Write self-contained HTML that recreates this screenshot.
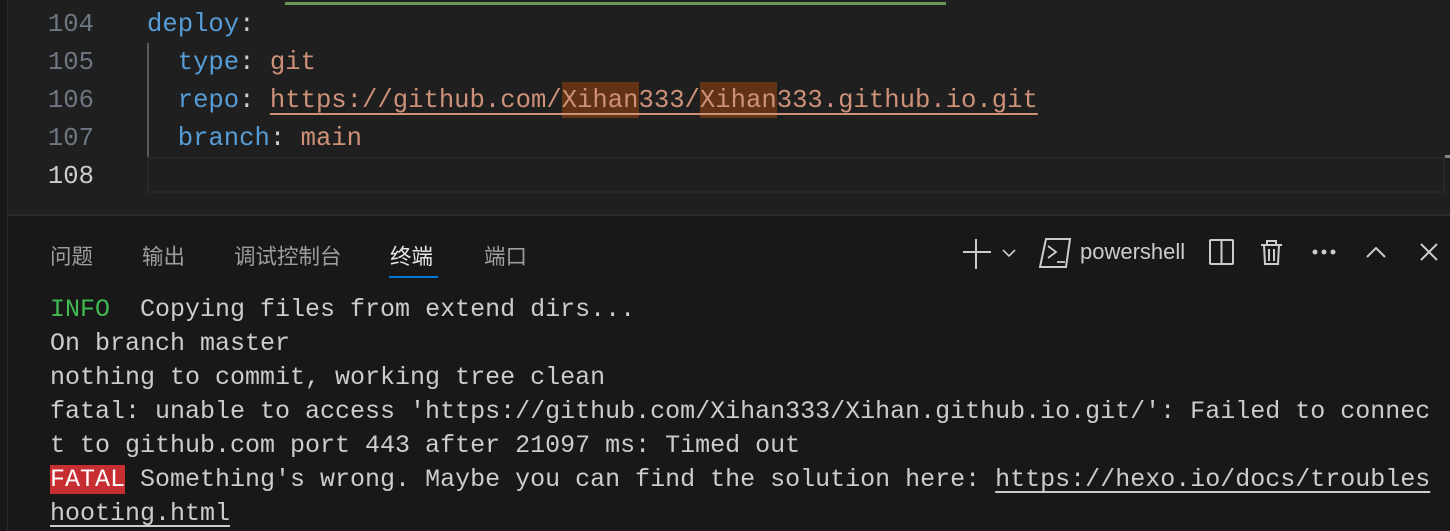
<!DOCTYPE html>
<html><head><meta charset="utf-8"><style>
*{margin:0;padding:0;box-sizing:border-box}
body{width:1450px;height:530px;overflow:hidden;background:#1f1f1f;position:relative;font-family:"Liberation Mono",monospace}
.ed{position:absolute;left:0;top:0;width:1450px;height:214px;background:#1f1f1f}
.ln{position:absolute;left:0;width:94px;text-align:right;color:#6e7681;font-size:25.6px;line-height:38px}
.code{position:absolute;left:147px;font-size:25.6px;line-height:38px;white-space:pre;color:#9cdcfe}
.k{color:#569cd6}.s{color:#ce9178}
.term{position:absolute;left:0;top:216px;width:1450px;height:314px;background:#181818}
.tab{position:absolute;top:24px;font-family:"Liberation Sans","Noto Sans CJK SC",sans-serif;font-size:21.5px;color:#9d9d9d}
.tl{position:absolute;left:50px;font-size:25px;line-height:34px;white-space:pre;color:#cccccc}
</style></head><body>
<div class="ed">
<div style="position:absolute;left:285px;top:2px;width:661px;height:3px;background:#6a9955"></div>
<div style="position:absolute;left:0;top:0;width:8px;height:530px;background:#181818;border-right:1px solid #2b2b2b"></div>
<div class="ln" style="top:6px">104</div>
<div class="ln" style="top:44px">105</div>
<div class="ln" style="top:82px">106</div>
<div class="ln" style="top:120px">107</div>
<div class="ln" style="top:158px;color:#cccccc">108</div>
<div style="position:absolute;left:147px;top:43px;width:2px;height:114px;background:#5a5a5a"></div>
<div style="position:absolute;left:147px;top:157px;width:1298px;height:36px;border:2px solid #282828"></div>
<div class="code" style="top:6px"><span class="k">deploy</span><span style="color:#ccc">:</span></div>
<div class="code" style="top:44px">  <span class="k">type</span><span style="color:#ccc">:</span> <span class="s">git</span></div>
<div style="position:absolute;left:562px;top:82px;width:77px;height:36px;background:#613214"></div>
<div style="position:absolute;left:700px;top:82px;width:77px;height:36px;background:#613214"></div>
<div class="code" style="top:82px">  <span class="k">repo</span><span style="color:#ccc">:</span> <span class="s" style="text-decoration:underline;text-underline-offset:6px">https://github.com/Xihan333/Xihan333.github.io.git</span></div>
<div class="code" style="top:120px">  <span class="k">branch</span><span style="color:#ccc">:</span> <span class="s">main</span></div>
<div style="position:absolute;left:1445px;top:155px;width:5px;height:3px;background:#888"></div>
</div>
<div style="position:absolute;left:8px;top:214px;width:1442px;height:2px;background:#2b2b2b"></div>
<div class="term">
<div style="position:absolute;left:0;top:0;width:8px;height:314px;background:#181818;border-right:1px solid #2b2b2b"></div>
<div class="tab" style="left:50px">问题</div>
<div class="tab" style="left:142px">输出</div>
<div class="tab" style="left:234px">调试控制台</div>
<div class="tab" style="left:390px;color:#e7e7e7">终端</div>
<div style="position:absolute;left:389px;top:60px;width:49px;height:2px;background:#0078d4"></div>
<div class="tab" style="left:484px">端口</div>
<svg style="position:absolute;left:950px;top:20px" width="500" height="34" viewBox="0 0 500 34" fill="none" stroke="#cccccc" stroke-width="2">
<path d="M26 3v30M13 16h28"/>
<path d="M53 14l6 6 6-6" stroke-width="1.6"/>
<path d="M96 3h24l-4 28H90z"/><path d="M98 10l8 6-8 6M107 26h8" stroke-width="1.8"/>
<rect x="260" y="4" width="23" height="24" rx="1"/><path d="M271.5 4v24"/>
<path d="M311 9h21M317 9V5h9v4M314 9l1 19h13l1-19M319 13v12M324 13v12"/>
<circle cx="365" cy="16" r="1.5" fill="#ccc"/><circle cx="374" cy="16" r="1.5" fill="#ccc"/><circle cx="383" cy="16" r="1.5" fill="#ccc"/>
<path d="M417 21l9-9 9 9"/>
<path d="M471 8l16 16M487 8l-16 16"/>
</svg>
<div style="position:absolute;left:1080px;top:23px;font-family:'Liberation Sans',sans-serif;font-size:22px;color:#cccccc">powershell</div>
<div class="tl" style="top:77px"><span style="color:#3fb950">INFO</span>  Copying files from extend dirs...</div>
<div class="tl" style="top:111px">On branch master</div>
<div class="tl" style="top:145px">nothing to commit, working tree clean</div>
<div class="tl" style="top:179px">fatal: unable to access 'https://github.com/Xihan333/Xihan.github.io.git/': Failed to connec</div>
<div class="tl" style="top:213px">t to github.com port 443 after 21097 ms: Timed out</div>
<div class="tl" style="top:247px"><span style="background:#c72e32;color:#fff">FATAL</span> Something's wrong. Maybe you can find the solution here: <span style="text-decoration:underline;text-underline-offset:5px">https://hexo.io/docs/troubles</span></div>
<div class="tl" style="top:281px"><span style="text-decoration:underline;text-underline-offset:5px">hooting.html</span></div>
</div>
</body></html>
